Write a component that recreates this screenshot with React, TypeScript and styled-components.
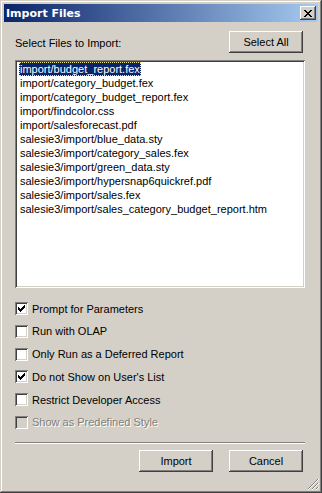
import React from 'react';
import styled, { createGlobalStyle, css } from 'styled-components';

const palette = {
  face: '#d4d0c8',
  shadow: '#808080',
  dark: '#404040',
  light: '#ffffff',
  select: '#0a246a',
};

const files = [
  'import/budget_report.fex',
  'import/category_budget.fex',
  'import/category_budget_report.fex',
  'import/findcolor.css',
  'import/salesforecast.pdf',
  'salesie3/import/blue_data.sty',
  'salesie3/import/category_sales.fex',
  'salesie3/import/green_data.sty',
  'salesie3/import/hypersnap6quickref.pdf',
  'salesie3/import/sales.fex',
  'salesie3/import/sales_category_budget_report.htm',
];

const options = [
  { text: 'Prompt for Parameters', checked: true },
  { text: 'Run with OLAP', checked: false },
  { text: 'Only Run as a Deferred Report', checked: false },
  { text: "Do not Show on User's List", checked: true },
  { text: 'Restrict Developer Access', checked: false },
  { text: 'Show as Predefined Style', checked: false, disabled: true },
];

const GlobalStyle = createGlobalStyle`
  html, body {
    margin: 0;
    padding: 0;
    background: ${palette.face};
  }
  * {
    box-sizing: border-box;
  }
`;

const raised = css`
  box-shadow: inset -1px -1px ${palette.dark}, inset 1px 1px ${palette.light},
    inset -2px -2px ${palette.shadow}, inset 2px 2px ${palette.face};
`;

const CheckMark = () => (
  <svg width="7" height="7" viewBox="0 0 7 7">
    <path d="M0 2h1v1h1v1h1V3h1V2h1V1h1V0h1v3h-1v1h-1v1h-1v1h-1v1H2V6H1V5H0z" fill="#000" />
  </svg>
);

const CloseGlyph = () => (
  <svg width="8" height="7" viewBox="0 0 8 7">
    <path
      d="M0 0h2v1h1v1h2V1h1V0h2v1H7v1H6v1H5v1h1v1h1v1h1v1H6V6H5V5H3v1H2v1H0V6h1V5h1V4h1V3H2V2H1V1H0z"
      fill="#000"
    />
  </svg>
);

const Grip = () => (
  <svg width="12" height="12" viewBox="0 0 12 12">
    <path d="M11 1L1 11M11 5L5 11M11 9L9 11" stroke={palette.shadow} strokeWidth="1" />
    <path d="M12 1L1 12M12 5L5 12M12 9L9 12" stroke={palette.light} strokeWidth="1" />
  </svg>
);

const App: React.FC = () => {
  return (
    <>
      <GlobalStyle />
      <StWindow>
        <StTitleBar>
          <StTitle>Import Files</StTitle>
          <StCloseButton>
            <CloseGlyph />
          </StCloseButton>
        </StTitleBar>
        <StBody>
          <StHeaderRow>
            <StLabel>Select Files to Import:</StLabel>
            <StButton>Select All</StButton>
          </StHeaderRow>
          <StListBox>
            {files.map((file, index) => (
              <StListItem key={file}>
                <StItemText $selected={index === 0}>{file}</StItemText>
              </StListItem>
            ))}
          </StListBox>
          <StOptions>
            {options.map((option) => (
              <StOption key={option.text} $disabled={option.disabled}>
                <StCheckBox $disabled={option.disabled}>
                  {option.checked && <CheckMark />}
                </StCheckBox>
                <span>{option.text}</span>
              </StOption>
            ))}
          </StOptions>
          <StSeparator />
          <StFooter>
            <StButton>Import</StButton>
            <StButton>Cancel</StButton>
          </StFooter>
        </StBody>
        <StGrip>
          <Grip />
        </StGrip>
      </StWindow>
    </>
  );
};

export default App;

const StWindow = styled.div`
  position: relative;
  width: 322px;
  height: 493px;
  padding: 4px;
  background: ${palette.face};
  box-shadow: inset -1px -1px ${palette.dark}, inset 1px 1px ${palette.face},
    inset -2px -2px ${palette.shadow}, inset 2px 2px ${palette.light};
  font-family: 'Liberation Sans', Arial, sans-serif;
  font-size: 11px;
  color: #000;
`;

const StTitleBar = styled.div`
  display: flex;
  align-items: center;
  justify-content: space-between;
  height: 18px;
  padding: 0 2px 0 2px;
  background: linear-gradient(to right, #0a246a, #a6caf0);
`;

const StTitle = styled.span`
  color: #fff;
  font-family: 'DejaVu Sans', 'Liberation Sans', sans-serif;
  font-weight: 700;
  font-size: 11px;
`;

const StCloseButton = styled.div`
  display: flex;
  align-items: center;
  justify-content: center;
  width: 16px;
  height: 14px;
  background: ${palette.face};
  ${raised};
`;

const StBody = styled.div`
  display: flex;
  flex-direction: column;
  padding: 9px 13px 0 11px;
`;

const StHeaderRow = styled.div`
  display: flex;
  align-items: center;
  justify-content: space-between;
  padding-right: 2px;
`;

const StLabel = styled.span`
  padding-top: 1px;
`;

const StButton = styled.button`
  width: 74px;
  height: 22px;
  padding: 0;
  border: none;
  background: ${palette.face};
  font-family: inherit;
  font-size: 11px;
  color: #000;
  ${raised};
`;

const StListBox = styled.ul`
  list-style: none;
  margin: 7px 0 0;
  padding: 2px 4px;
  height: 228px;
  background: #fff;
  box-shadow: inset 1px 1px ${palette.shadow}, inset -1px -1px ${palette.light},
    inset 2px 2px ${palette.dark}, inset -2px -2px ${palette.face};
`;

const StListItem = styled.li`
  display: flex;
  height: 14px;
  line-height: 14px;
`;

const StItemText = styled.span<{ $selected?: boolean }>`
  padding: 0 1px;
  white-space: nowrap;
  ${({ $selected }) =>
    $selected &&
    css`
      background: ${palette.select};
      color: #fff;
      outline: 1px dotted #f0e68c;
      outline-offset: -1px;
    `}
`;

const StOptions = styled.div`
  display: flex;
  flex-direction: column;
  gap: 9.8px;
  margin-top: 14px;
`;

const StOption = styled.label<{ $disabled?: boolean }>`
  display: flex;
  align-items: center;
  gap: 4px;
  height: 13px;
  color: ${({ $disabled }) => ($disabled ? palette.shadow : '#000')};
  text-shadow: ${({ $disabled }) => ($disabled ? `1px 1px ${palette.light}` : 'none')};
`;

const StCheckBox = styled.span<{ $disabled?: boolean }>`
  display: flex;
  align-items: center;
  justify-content: center;
  width: 13px;
  height: 13px;
  flex-shrink: 0;
  background: ${({ $disabled }) => ($disabled ? palette.face : '#fff')};
  box-shadow: inset 1px 1px ${palette.shadow}, inset -1px -1px ${palette.light},
    inset 2px 2px ${palette.dark}, inset -2px -2px ${palette.face};
`;

const StSeparator = styled.div`
  height: 2px;
  margin-top: 13px;
  border-top: 1px solid ${palette.shadow};
  border-bottom: 1px solid ${palette.light};
`;

const StFooter = styled.div`
  display: flex;
  justify-content: flex-end;
  gap: 16px;
  margin-top: 6px;
  padding-right: 2px;
`;

const StGrip = styled.div`
  position: absolute;
  right: 3px;
  bottom: 3px;
  display: flex;
`;
